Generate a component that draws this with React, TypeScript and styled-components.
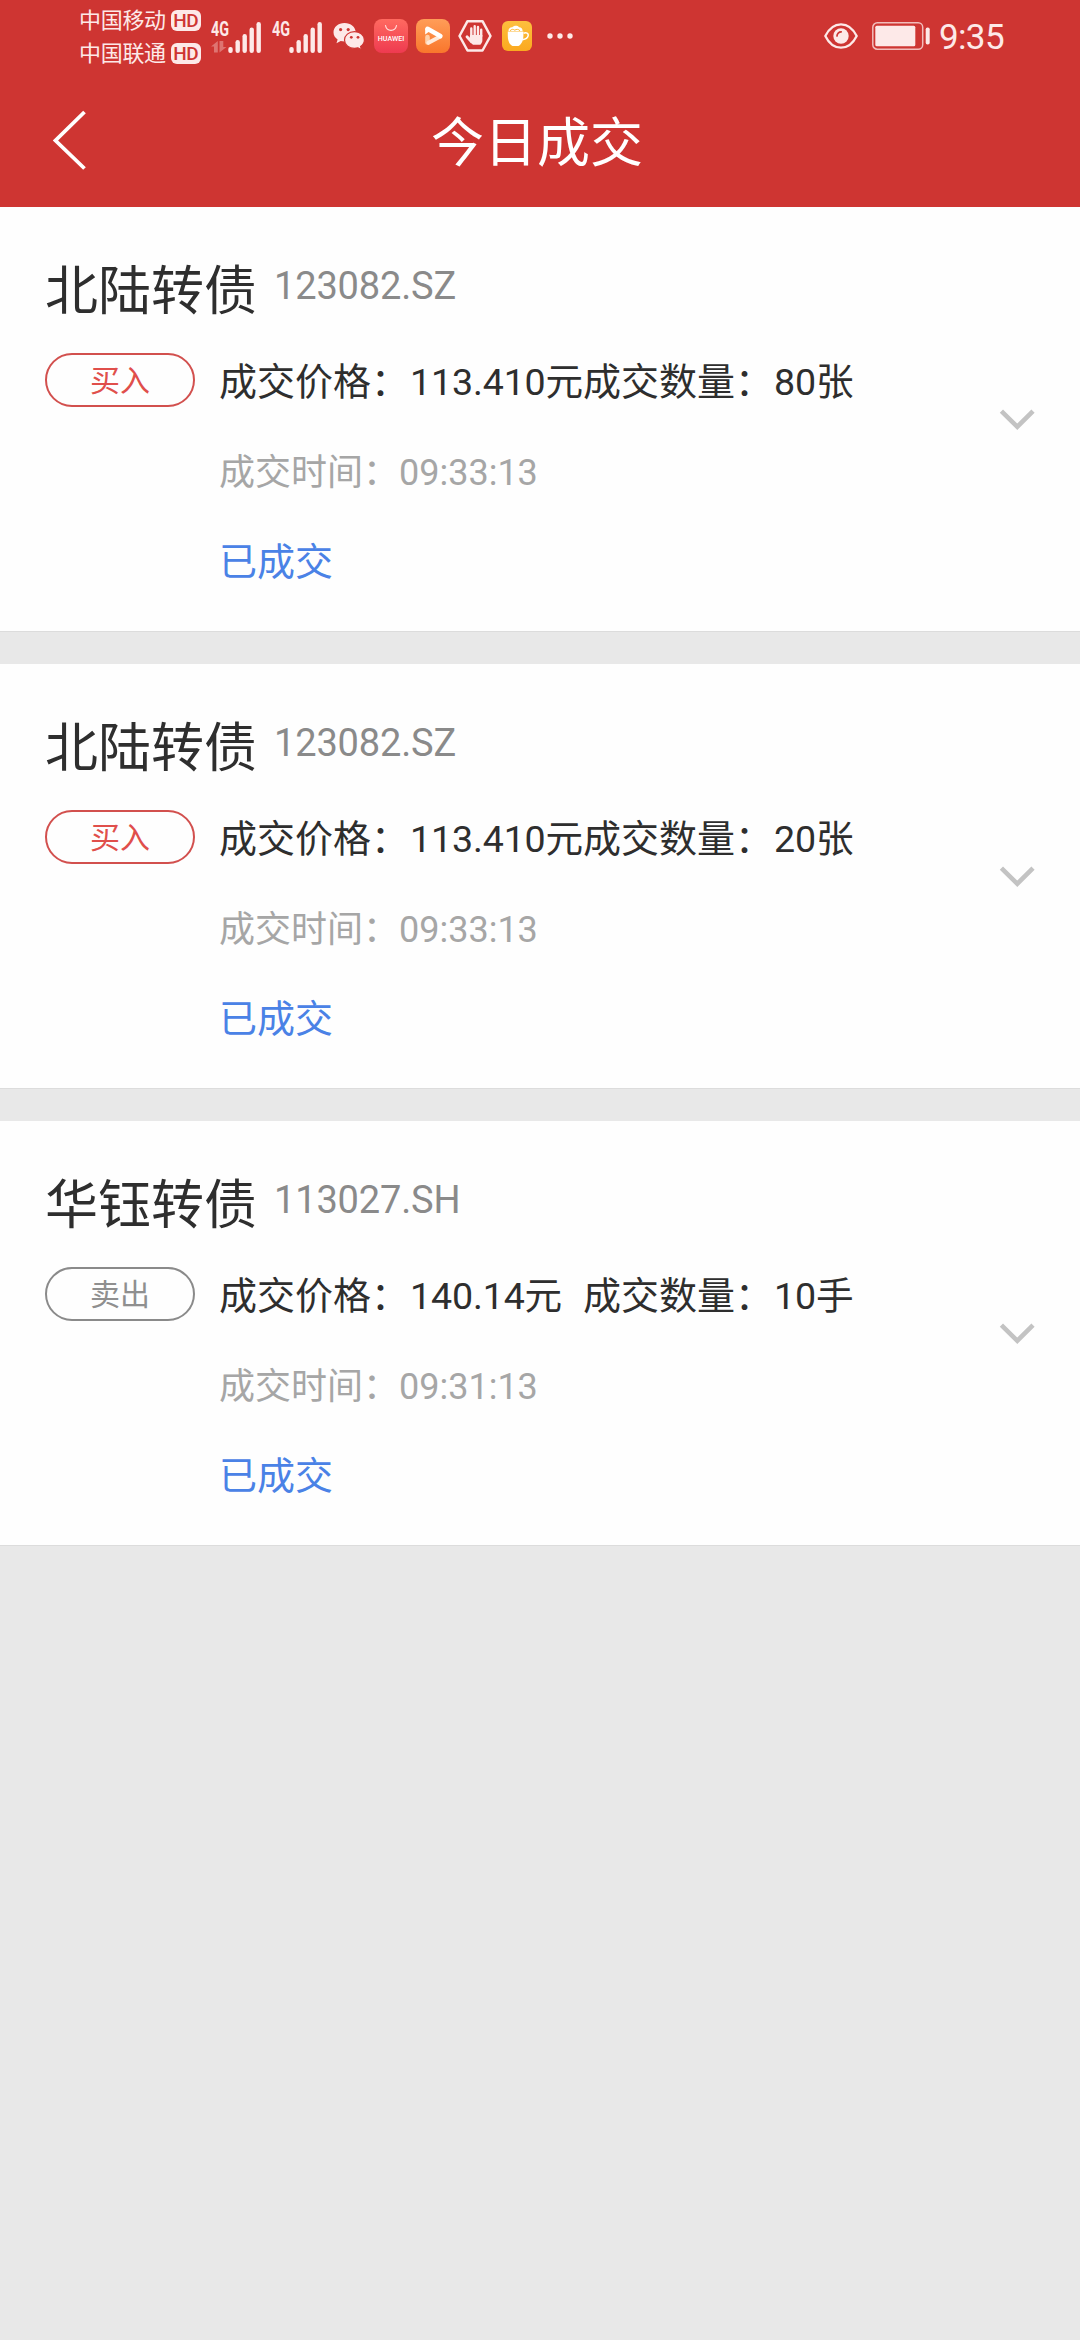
import React from "react";
import styled, { createGlobalStyle } from "styled-components";

const PALE = "#fde9e8";
const RED = "#ce3532";

const GlobalStyle = createGlobalStyle`
  html, body { margin: 0; padding: 0; background: #e8e8e8; }
  body { font-family: Roboto, "Noto Sans CJK SC", sans-serif; }
  *, *::before, *::after { box-sizing: border-box; }
  svg { display: block; flex: none; }
`;

const Screen = styled.div`
  width: 1080px;
  min-height: 2340px;
  background: #e8e8e8;
`;

const Header = styled.header`
  height: 207px;
  background: ${RED};
  color: #fff;
`;

const StatusBar = styled.div`
  display: flex;
  align-items: flex-start;
  justify-content: space-between;
  height: 73px;
  padding: 0 76px 0 79px;
  color: ${PALE};
`;

const StatusGroup = styled.div`
  display: flex;
  align-items: center;
  height: 72px;
`;

const Carriers = styled.div`
  display: flex;
  flex-direction: column;
  gap: 11px;
  padding-top: 2px;
`;

const Carrier = styled.div`
  display: flex;
  align-items: center;
  height: 22px;
  font-size: 22px;
  line-height: 22px;
  letter-spacing: -0.3px;
  white-space: nowrap;
`;

const HdBadge = styled.span`
  display: flex;
  justify-content: center;
  width: 30px;
  height: 21px;
  margin-left: 5px;
  border-radius: 6px;
  background: ${PALE};
  color: ${RED};
  font-size: 19px;
  font-weight: 500;
  line-height: 22px;
  letter-spacing: -0.5px;
`;

const Glyph = styled.span<{ $gap: number }>`
  display: block;
  margin-left: ${(p) => p.$gap}px;
`;

const Clock = styled.span`
  margin-left: 9px;
  font-size: 35px;
  line-height: 50px;
  letter-spacing: -0.6px;
  padding-top: 3px;
`;

const NavBar = styled.nav`
  display: grid;
  grid-template-columns: 137px 1fr 143px;
  align-items: center;
  height: 134px;
`;

const BackButton = styled.button`
  display: flex;
  align-items: center;
  height: 134px;
  padding: 0 0 0 52px;
  border: 0;
  background: none;
  color: #fff;
`;

const Title = styled.h1`
  margin: 0;
  padding-top: 4px;
  height: 134px;
  font-size: 53px;
  font-weight: 400;
  line-height: 134px;
  text-align: center;
  white-space: nowrap;
`;

const List = styled.main`
  display: flex;
  flex-direction: column;
  gap: 33px;
`;

const Card = styled.article`
  display: flex;
  align-items: center;
  justify-content: space-between;
  height: 424px;
  padding: 0 45px;
  background: #fefefe;
  box-shadow: 0 1px 0 #dcdcdc;
`;

const CardBody = styled.div`
  height: 424px;
  padding-top: 54px;
`;

const Heading = styled.div`
  display: flex;
  align-items: flex-start;
  height: 60px;
`;

const BondName = styled.h2`
  margin: 0;
  padding-top: 1px;
  color: #2e2e2e;
  font-size: 53px;
  font-weight: 400;
  line-height: 60px;
`;

const BondCode = styled.span`
  margin-left: 17px;
  color: #8a8a8a;
  font-size: 38px;
  line-height: 50px;
  letter-spacing: -0.15px;
`;

const Details = styled.div`
  display: flex;
  align-items: flex-start;
  margin-top: 32px;
`;

const Side = styled.span<{ $sell?: boolean }>`
  width: 150px;
  height: 54px;
  padding-top: 1px;
  border: 2px solid ${(p) => (p.$sell ? "#8a8a8a" : "#d2504e")};
  border-radius: 27px;
  color: ${(p) => (p.$sell ? "#8f8f8f" : "#e04f4b")};
  font-size: 30px;
  line-height: 50px;
  text-align: center;
`;

const Facts = styled.div`
  display: flex;
  flex-direction: column;
  gap: 40px;
  margin: 4px 0 0 24px;
  font-size: 38px;
  line-height: 50px;
  white-space: nowrap;
`;

const DealLine = styled.div`
  display: flex;
  color: #2e2e2e;
`;

const DealCell = styled.span<{ $width?: number }>`
  width: ${(p) => (p.$width ? `${p.$width}px` : "auto")};
`;

const Figure = styled.span`
  margin-left: 1px;
  font-size: 37.6px;
  letter-spacing: -0.15px;
`;

const Time = styled.div`
  padding-top: 1px;
  height: 50px;
  color: #a6a6a6;
  font-size: 36px;
`;

const Status = styled.div`
  color: #4a82e6;
`;

const Bars = () => (
  <>
    <text x="0" y="17" fontSize="20" fontWeight="700" textLength="18" lengthAdjust="spacingAndGlyphs">4G</text>
    <rect x="17.3" y="28" width="4.4" height="6" rx="2" />
    <rect x="24.5" y="21" width="4.4" height="13" rx="2.2" />
    <rect x="31.5" y="15" width="4.4" height="19" rx="2.2" />
    <rect x="38.5" y="8.5" width="4.4" height="25.5" rx="2.2" />
    <rect x="45.5" y="3" width="4.4" height="31" rx="2.2" />
  </>
);

const Signal = ({ data }: { data?: boolean }) => (
  <svg width="50" height="42" viewBox="0 -4 50 42" fill={PALE}>
    {data && (
      <g opacity="0.35">
        <path d="M6.800 22v11.500H3v-6H0z" />
        <path d="M8.500 33.500V22h3.800v6h3.200z" />
      </g>
    )}
    <Bars />
  </svg>
);

const ChatBubbles = () => (
  <svg width="32" height="28" viewBox="0 0 32 28">
    <path d="M11.500 1C5.200 1 .5 5.200.5 10.300c0 3 1.600 5.600 4.100 7.300L3.500 21.300l4.200-2.200c1.200.3 2.500.5 3.800.5 6.300 0 11.200-4.200 11.200-9.300S17.800 1 11.500 1z" fill={PALE} />
    <path d="M21.500 9.700c-5.700 0-10 3.700-10 8.300s4.300 8.300 10 8.300c1.200 0 2.400-.2 3.500-.5l3.500 1.900-.9-3.200c2.300-1.500 3.800-3.800 3.800-6.500 0-4.600-4.300-8.300-9.900-8.300z" fill={PALE} stroke={RED} strokeWidth="1.200" />
    <circle cx="7.600" cy="7.600" r="1.600" fill={RED} />
    <circle cx="15.200" cy="7.600" r="1.600" fill={RED} />
    <circle cx="18.300" cy="15.300" r="1.400" fill={RED} />
    <circle cx="25" cy="15.300" r="1.400" fill={RED} />
  </svg>
);

const StoreIcon = () => (
  <svg width="34" height="34" viewBox="0 0 34 34">
    <defs>
      <linearGradient id="store" x1="0" y1="0" x2="0" y2="1">
        <stop offset="0" stopColor="#ff6a60" />
        <stop offset="1" stopColor="#ee3a50" />
      </linearGradient>
    </defs>
    <rect width="34" height="34" rx="8" fill="url(#store)" />
    <path d="M11.500 6.500c.6 3 2.700 4.800 5.500 4.800s4.900-1.800 5.500-4.800" fill="none" stroke="#ffe3df" strokeWidth="1.200" strokeLinecap="round" />
    <text x="3.800" y="22" fontSize="7" fontWeight="500" fill="#fff" textLength="26.400" lengthAdjust="spacingAndGlyphs">HUAWEI</text>
  </svg>
);

const VideoIcon = () => (
  <svg width="34" height="34" viewBox="0 0 34 34">
    <defs>
      <linearGradient id="video" x1="0" y1="0" x2="0" y2="1">
        <stop offset="0" stopColor="#ff9d58" />
        <stop offset="1" stopColor="#f9762c" />
      </linearGradient>
    </defs>
    <rect width="34" height="34" rx="8" fill="url(#video)" />
    <path d="M11.500 18v5.500" stroke="#ffd0aa" strokeWidth="4.600" strokeLinecap="round" />
    <path d="M12.500 23.800L24.300 17.500" stroke="#ffeadb" strokeWidth="4" strokeLinecap="round" />
    <path d="M11.500 9.800L24.300 17" stroke="#fff" strokeWidth="4.600" strokeLinecap="round" />
    <path d="M9.200 9v6.500l4-3z" fill="#fff" />
  </svg>
);

const HandIcon = () => (
  <svg width="34" height="34" viewBox="0 0 34 34">
    <path d="M9.500 2.200h15L32.500 17l-8 14.500h-15L1.500 17z" fill="none" stroke={PALE} strokeWidth="2.500" strokeLinejoin="round" />
    <g stroke={PALE} strokeWidth="2.400" strokeLinecap="round" fill="none">
      <path d="M13.300 17V9.500M16.700 16V7.300M20 16V8M23.200 17v-6.300" />
      <path d="M9 17.800l4.500 5" strokeWidth="2.800" />
    </g>
    <path d="M12.100 16h12.300v5c0 2-1 3.500-2 4.800h-7.400c-1.600-1-2.800-3-3.600-5.300z" fill={PALE} />
  </svg>
);

const CupIcon = () => (
  <svg width="30" height="30" viewBox="0 0 30 30">
    <defs>
      <linearGradient id="cup" x1="0" y1="0" x2="0" y2="1">
        <stop offset="0" stopColor="#fdbf3e" />
        <stop offset="1" stopColor="#fba91f" />
      </linearGradient>
    </defs>
    <rect width="30" height="30" rx="6" fill="url(#cup)" />
    <path d="M6.500 10c0-2.600 1.800-3.900 3.800-3.700C12 4.300 15.600 4.300 17 6.200c2.200-.1 3.600 1.500 3.600 3.800z" fill="#fff" />
    <path d="M8 9.800c1.500-1.800 3.300-1.800 4.800-.6 1.500-1.200 3.800-1.200 5.200.6" fill="none" stroke="#fdb633" strokeWidth="1" />
    <path d="M5.800 10.500h15.600v4.300c0 4-1.200 7-3.200 9-.7.800-1.500 1.200-2.700 1.200h-4c-1.200 0-2-.4-2.700-1.200-2-2-3-5-3-9z" fill="#fff" />
    <path d="M21.500 12.300c2.800-1.200 5.200 0 4.700 2.400-.5 2.200-2.800 3.700-5.700 4.100" fill="none" stroke="#fff" strokeWidth="1.500" />
  </svg>
);

const MoreDots = () => (
  <svg width="26" height="6" viewBox="0 0 26 6" fill={PALE}>
    <circle cx="3" cy="3" r="2.700" />
    <circle cx="13" cy="3" r="2.700" />
    <circle cx="23" cy="3" r="2.700" />
  </svg>
);

const EyeIcon = () => (
  <svg width="34" height="26" viewBox="0 0 34 26">
    <path d="M1.300 13C5 5.500 10.500 1.300 17 1.300S29 5.500 32.700 13C29 20.500 23.500 24.700 17 24.700S5 20.500 1.300 13z" fill="none" stroke={PALE} strokeWidth="2.300" strokeLinejoin="round" />
    <circle cx="17" cy="13" r="7.700" fill={PALE} />
    <path d="M13 13a4.200 4.200 0 0 1 4.200-4.200" fill="none" stroke={RED} strokeWidth="1.700" strokeLinecap="round" />
  </svg>
);

const BatteryIcon = () => (
  <svg width="58" height="28" viewBox="0 0 58 28">
    <rect x="0.800" y="0.800" width="49.900" height="26.400" rx="4.500" fill="none" stroke={PALE} strokeOpacity="0.750" strokeWidth="1.500" />
    <rect x="3.300" y="3.700" width="40" height="20.600" rx="1.500" fill={PALE} />
    <rect x="53.700" y="5.500" width="4" height="17" rx="1.800" fill={PALE} />
  </svg>
);

const BackArrow = () => (
  <svg width="36" height="60" viewBox="0 0 36 60">
    <path d="M32.500 2L3.500 30.500 32.500 58.500" fill="none" stroke="#fff" strokeWidth="3.800" />
  </svg>
);

const ChevronDown = () => (
  <svg width="36" height="24" viewBox="0 0 36 24">
    <path d="M2.400 4.200L18.300 19.700 34 4.200" fill="none" stroke="#c3c3c3" strokeWidth="4.600" />
  </svg>
);

interface Deal {
  name: string;
  code: string;
  sell?: boolean;
  price: string;
  amount: string;
  time: string;
}

const deals: Deal[] = [
  { name: "北陆转债", code: "123082.SZ", price: "113.410元", amount: "80张", time: "09:33:13" },
  { name: "北陆转债", code: "123082.SZ", price: "113.410元", amount: "20张", time: "09:33:13" },
  { name: "华钰转债", code: "113027.SH", sell: true, price: "140.14元", amount: "10手", time: "09:31:13" },
];

const DealCard = ({ deal }: { deal: Deal }) => (
  <Card>
    <CardBody>
      <Heading>
        <BondName>{deal.name}</BondName>
        <BondCode>{deal.code}</BondCode>
      </Heading>
      <Details>
        <Side $sell={deal.sell}>{deal.sell ? "卖出" : "买入"}</Side>
        <Facts>
          <DealLine>
            <DealCell $width={364}>成交价格：<Figure>{deal.price}</Figure></DealCell>
            <DealCell>成交数量：<Figure>{deal.amount}</Figure></DealCell>
          </DealLine>
          <Time>成交时间：{deal.time}</Time>
          <Status>已成交</Status>
        </Facts>
      </Details>
    </CardBody>
    <ChevronDown />
  </Card>
);

export default function App() {
  return (
    <Screen>
      <GlobalStyle />
      <Header>
        <StatusBar>
          <StatusGroup>
            <Carriers>
              <Carrier>中国移动<HdBadge>HD</HdBadge></Carrier>
              <Carrier>中国联通<HdBadge>HD</HdBadge></Carrier>
            </Carriers>
            <Glyph $gap={10}><Signal data /></Glyph>
            <Glyph $gap={11}><Signal /></Glyph>
            <Glyph $gap={11}><ChatBubbles /></Glyph>
            <Glyph $gap={9}><StoreIcon /></Glyph>
            <Glyph $gap={8}><VideoIcon /></Glyph>
            <Glyph $gap={8}><HandIcon /></Glyph>
            <Glyph $gap={10}><CupIcon /></Glyph>
            <Glyph $gap={15}><MoreDots /></Glyph>
          </StatusGroup>
          <StatusGroup>
            <EyeIcon />
            <Glyph $gap={14}><BatteryIcon /></Glyph>
            <Clock>9:35</Clock>
          </StatusGroup>
        </StatusBar>
        <NavBar>
          <BackButton aria-label="返回"><BackArrow /></BackButton>
          <Title>今日成交</Title>
        </NavBar>
      </Header>
      <List>
        {deals.map((deal, i) => (
          <DealCard key={i} deal={deal} />
        ))}
      </List>
    </Screen>
  );
}
